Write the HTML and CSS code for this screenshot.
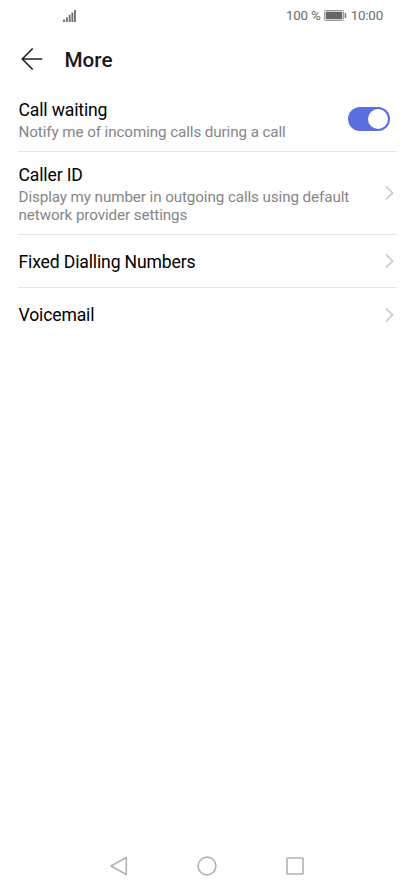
FILE: index.html
```html
<!DOCTYPE html>
<html lang="en">
<head>
<meta charset="utf-8">
<title>More</title>
<link rel="stylesheet" href="styles.css">
</head>
<body>
<div class="screen">
  <div class="status">
    <svg class="signal" width="14" height="12" viewBox="0 0 14 12"><path d="M1 9.5V12M3.9 7.2V12M6.7 4.8V12M9.4 2.5V12M12 0V12" stroke="#747474" stroke-width="1.9"/></svg>
    <div class="status-right">
      <span class="battery-text">100 %</span>
      <svg class="battery" width="23" height="11" viewBox="0 0 23 11"><rect x=".5" y=".5" width="19" height="10" rx="1" fill="none" stroke="#999"/><rect x="1.7" y="1.7" width="16.6" height="7.6" fill="#666"/><rect x="20.7" y="3" width="1.5" height="5" fill="#777"/></svg>
      <span class="time">10:00</span>
    </div>
  </div>
  <header class="header">
    <svg class="back" width="22" height="22" viewBox="0 0 22 22"><path d="M11.2 1L1.2 11L11.2 21M1.2 11H20.5" fill="none" stroke="#222" stroke-width="1.7" stroke-linecap="round" stroke-linejoin="round"/></svg>
    <h1 class="title">More</h1>
  </header>
  <main class="list">
    <div class="row waiting">
      <div class="text"><div class="label">Call waiting</div><div class="desc">Notify me of incoming calls during a call</div></div>
      <span class="switch"><span class="knob"></span></span>
    </div>
    <div class="row caller">
      <div class="text"><div class="label">Caller ID</div><div class="desc">Display my number in outgoing calls using default<br>network provider settings</div></div>
      <svg class="chevron" width="9" height="16" viewBox="0 0 9 16"><path d="M1 1.5L7.6 8L1 14.5"/></svg>
    </div>
    <div class="row single">
      <div class="label">Fixed Dialling Numbers</div>
      <svg class="chevron" width="9" height="16" viewBox="0 0 9 16"><path d="M1 1.5L7.6 8L1 14.5"/></svg>
    </div>
    <div class="row single last">
      <div class="label">Voicemail</div>
      <svg class="chevron" width="9" height="16" viewBox="0 0 9 16"><path d="M1 1.5L7.6 8L1 14.5"/></svg>
    </div>
  </main>
  <nav class="nav">
    <svg width="20" height="20" viewBox="0 0 20 20"><path d="M17.3 1.5V18.5L2 10Z"/></svg>
    <svg width="20" height="20" viewBox="0 0 20 20"><circle cx="10" cy="10" r="8.9"/></svg>
    <svg width="20" height="20" viewBox="0 0 20 20"><rect x="2" y="2" width="16" height="16" rx=".5"/></svg>
  </nav>
</div>
</body>
</html>
```
FILE: styles.css
```css
* { box-sizing: border-box; }
body { margin: 0; background: #fff; font-family: Roboto, sans-serif; }
.screen { width: 415px; height: 890px; display: flex; flex-direction: column; }
.status { height: 31px; padding: 0 32px 0 63px; display: flex; align-items: center; justify-content: space-between; color: #6c6c6c; font-size: 13.4px; letter-spacing: -.2px; }
.status-right { display: flex; align-items: center; gap: 3.5px; }
.signal, .battery { display: block; }
.header { height: 56px; display: flex; align-items: center; padding-left: 21px; gap: 21.5px; }
.title { margin: 0; padding-top: 1px; font-size: 20.7px; line-height: 24px; font-weight: 500; color: #191919; }
.list { flex: 1; padding-left: 18px; }
.row { display: flex; align-items: center; justify-content: space-between; border-bottom: 1px solid #e5e5e5; padding-right: 3px; width: 379px; }
.waiting { height: 65px; padding-right: 7px; }
.caller { height: 83px; }
.single { height: 53px; }
.single.last { height: 54px; border: 0; }
.label { font-size: 17.6px; line-height: 22px; letter-spacing: -.15px; color: #000; padding-left: .5px; }
.single .label { padding-top: 1px; }
.single.last .label { padding-top: 0; }
.text { padding-top: 1px; }
.desc { margin-top: 1px; padding-top: 1px; margin-bottom: -1px; font-size: 15.2px; line-height: 18px; letter-spacing: -.09px; color: #858585; padding-left: .5px; white-space: nowrap; }
.switch { width: 42px; height: 24px; border-radius: 12px; background: #596edf; padding: 2px; display: flex; justify-content: flex-end; }
.knob { width: 20px; height: 20px; border-radius: 50%; background: #fff; }
.chevron { fill: none; stroke: #c8c8c8; stroke-width: 1.7; }
.nav { height: 48px; padding-right: 1px; display: flex; justify-content: center; align-items: center; gap: 68px; }
.nav svg { fill: none; stroke: #b2b2b2; stroke-width: 1.6; stroke-linejoin: round; }
```
